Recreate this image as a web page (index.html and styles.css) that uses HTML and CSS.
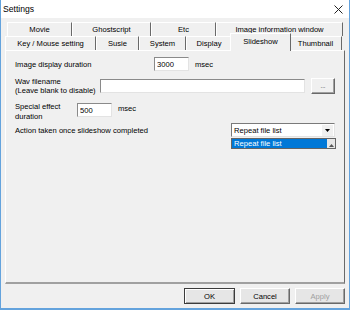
FILE: index.html
```html
<!DOCTYPE html>
<html lang="en">
<head>
  <meta charset="UTF-8">
  <title>Settings</title>
  <link rel="stylesheet" href="styles.css">
</head>
<body>
  <div class="window">
    <div class="titlebar">
      <span class="title">Settings</span>
      <svg class="close" width="9" height="9" viewBox="0 0 9 9">
        <path d="M0.5 0.5 L8.5 8.5 M8.5 0.5 L0.5 8.5" stroke="#222" stroke-width="1" fill="none"/>
      </svg>
    </div>

    <div class="client">
      <div class="tabs">
        <div class="tab-row back">
          <div class="tab w-movie">Movie</div>
          <div class="tab w-ghost">Ghostscript</div>
          <div class="tab w-etc">Etc</div>
          <div class="tab w-info">Image information window</div>
        </div>
        <div class="tab-row front">
          <div class="tab w-key">Key / Mouse setting</div>
          <div class="tab w-susie">Susie</div>
          <div class="tab w-system">System</div>
          <div class="tab w-display">Display</div>
          <div class="tab w-slide selected">Slideshow</div>
          <div class="tab w-thumb">Thumbnail</div>
        </div>
      </div>

      <div class="panel">
        <div class="row row-duration">
          <span class="label l-duration">Image display duration</span>
          <input class="field f-short" type="text" value="3000">
          <span class="unit">msec</span>
        </div>

        <div class="row row-wav">
          <span class="label l-wav">Wav filename<br>(Leave blank to disable)</span>
          <input class="field f-wav" type="text" value="">
          <button class="browse">...</button>
        </div>

        <div class="row row-effect">
          <span class="label l-effect">Special effect<br>duration</span>
          <input class="field f-short" type="text" value="500">
          <span class="unit">msec</span>
        </div>

        <div class="row row-action">
          <span class="label l-action">Action taken once slideshow completed</span>
          <div class="combo">
            <span class="combo-text">Repeat file list</span>
            <span class="combo-btn">
              <svg width="5" height="3" viewBox="0 0 5 3"><path d="M0 0 H5 L2.5 3 Z" fill="#000"/></svg>
            </span>
            <div class="dropdown">
              <span class="item">Repeat file list</span>
              <span class="grip">
                <svg width="5" height="3" viewBox="0 0 5 3"><path d="M0 3 H5 L2.5 0 Z" fill="#555"/></svg>
              </span>
            </div>
          </div>
        </div>
      </div>

      <div class="buttons">
        <button class="btn default">OK</button>
        <button class="btn">Cancel</button>
        <button class="btn disabled">Apply</button>
      </div>
    </div>
  </div>
</body>
</html>
```

FILE: styles.css
```css
:root {
  font-family: "Liberation Sans", Arial, sans-serif;
  --face: #f0f0f0;
  --frame: #64a3dd;
  --shadow: #a0a0a0;
  --dark: #696969;
}
body {
  margin: 0;
  width: 350px;
  height: 310px;
  overflow: hidden;
}
.window {
  width: 350px;
  height: 310px;
  box-sizing: border-box;
  border: 1px solid var(--frame);
  border-top: none;
  border-bottom-width: 2px;
  background: var(--face);
  display: flex;
  flex-direction: column;
  font-size: 7.6px;
  color: #000;
}
.titlebar {
  height: 18px;
  background: #fff;
  display: flex;
  align-items: center;
  justify-content: space-between;
  padding: 0 6px 0 2px;
}
.title {
  font-size: 8.6px;
}
.client {
  flex: 1;
  display: flex;
  flex-direction: column;
  padding: 4px 4px 0 4px;
}

/* tabs */
.tabs {
  height: 28px;
  display: flex;
  flex-direction: column;
  position: relative;
  z-index: 1;
}
.tab-row {
  display: flex;
  height: 14px;
}
.tab-row.back {
  padding-left: 2px;
}
.tab {
  box-sizing: border-box;
  height: 14px;
  border-top: 1px solid #fff;
  border-left: 1px solid #fff;
  border-right: 1px solid var(--dark);
  display: flex;
  align-items: center;
  justify-content: center;
  background: var(--face);
  white-space: nowrap;
}
.tab.selected {
  height: 18px;
  margin-top: -3px;
  margin-left: -2px;
  margin-right: -2px;
  padding-bottom: 3px;
  position: relative;
  z-index: 2;
}
.w-movie { width: 65px; }
.w-ghost { width: 79px; }
.w-etc { width: 65px; }
.w-info { width: 127px; }
.w-key { width: 91px; }
.w-susie { width: 43px; }
.w-system { width: 47px; }
.w-display { width: 46px; }
.w-slide { width: 61px; }
.w-thumb { width: 53px; }

/* panel */
.panel {
  box-sizing: border-box;
  width: 340px;
  height: 234px;
  border-top: 1px solid #fff;
  border-left: 1px solid #fff;
  border-right: 1px solid var(--dark);
  border-bottom: 2px solid var(--shadow);
  padding: 6px 9px 0 9px;
  display: flex;
  flex-direction: column;
}
.row {
  display: flex;
  align-items: center;
}
.label {
  line-height: 9px;
}
.row-duration { height: 14px; }
.l-duration { width: 139px; }
.row-wav { height: 16px; margin-top: 7px; }
.l-wav { width: 85px; }
.row-effect { height: 20px; margin-top: 9px; align-items: flex-start; }
.l-effect { width: 62px; line-height: 10px; margin-top: -1px; }
.row-effect .unit { margin-top: 1px; }
.row-action { height: 14px; margin-top: 0; }
.l-action { flex: 1; }

.field {
  box-sizing: border-box;
  height: 14px;
  margin: 0;
  padding: 0 2px;
  font: inherit;
  background: #fff;
  border: 1px solid;
  border-color: #8a8a8a #e3e3e3 #e3e3e3 #8a8a8a;
  outline: none;
}
.f-short { width: 35px; }
.f-wav { width: 205px; }
.unit { margin-left: 6px; }
.browse {
  box-sizing: border-box;
  width: 24px;
  height: 16px;
  margin: 0 0 0 6px;
  padding: 0;
  font: inherit;
  font-size: 6px;
  background: var(--face);
  border: 1px solid;
  border-color: #fff #696969 #696969 #fff;
  box-shadow: inset -1px -1px 0 #a0a0a0;
}

/* combo */
.combo {
  box-sizing: border-box;
  width: 104px;
  height: 14px;
  background: #fff;
  border: 1px solid;
  border-color: #7a7a7a #e3e3e3 #e3e3e3 #7a7a7a;
  display: flex;
  align-items: center;
  position: relative;
}
.combo-text {
  flex: 1;
  padding-left: 2px;
}
.combo-btn {
  width: 11px;
  height: 11px;
  margin-right: 1px;
  background: var(--face);
  border-left: 1px solid #fff;
  display: flex;
  align-items: center;
  justify-content: center;
}
.dropdown {
  position: absolute;
  left: -1px;
  top: 14px;
  width: 105px;
  height: 11px;
  box-sizing: border-box;
  border: 1px solid #646464;
  background: #fff;
  display: flex;
}
.item {
  flex: 1;
  background: #0078d7;
  color: #fff;
  padding-left: 2px;
  line-height: 9px;
}
.grip {
  width: 8px;
  background: #e6e6e6;
  display: flex;
  align-items: flex-end;
  justify-content: center;
  padding-bottom: 1px;
}

/* buttons */
.buttons {
  display: flex;
  justify-content: flex-end;
  gap: 5px;
  margin-top: 4px;
  padding-right: 0;
}
.btn {
  box-sizing: border-box;
  width: 50px;
  height: 16px;
  margin: 0;
  padding: 0;
  font: inherit;
  color: #000;
  background: #e6e6e6;
  border: 1px solid;
  border-color: #fff #696969 #696969 #fff;
  box-shadow: inset -1px -1px 0 #a0a0a0;
}
.btn.default {
  width: 51px;
  border: 1px solid #3c3c3c;
  box-shadow: inset 1px 1px 0 #fff, inset -1px -1px 0 #a0a0a0;
}
.btn.disabled {
  color: #a0a0a0;
}
```
